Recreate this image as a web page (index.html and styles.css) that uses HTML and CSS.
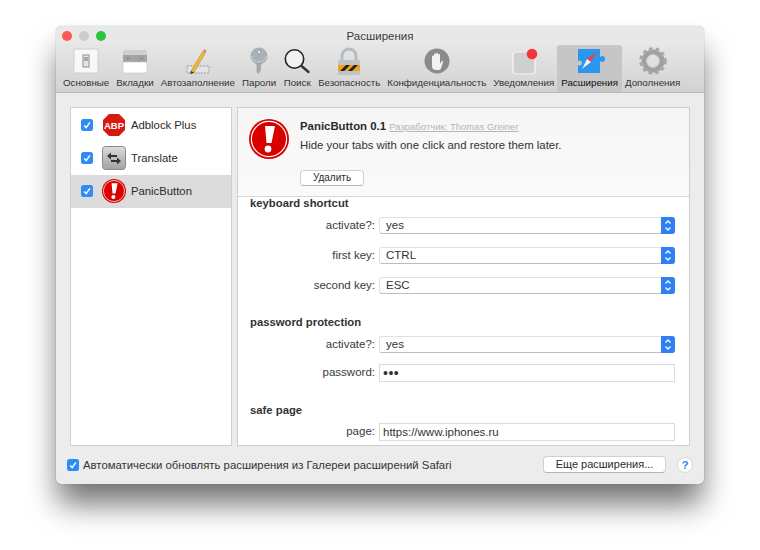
FILE: index.html
```html
<!DOCTYPE html>
<html lang="ru">
<head>
  <meta charset="UTF-8" />
  <title>Расширения</title>
  <link rel="stylesheet" href="styles.css">
</head>
<body>
  <svg class="defs" width="0" height="0">
    <defs>
      <linearGradient id="grey" x1="0" y1="0" x2="0" y2="1">
        <stop offset="0" stop-color="#dcdcdc"/>
        <stop offset="1" stop-color="#a2a2a2"/>
      </linearGradient>
    </defs>
    <symbol id="panic" viewBox="0 0 40 40">
      <circle cx="20" cy="20" r="20" fill="#d90000"/>
      <circle cx="20" cy="20" r="17.6" fill="none" stroke="#fff" stroke-width="1.2"/>
      <path d="M16 7h10l-3.500 17h-5z" fill="#fff"/>
      <circle cx="19" cy="30" r="3.400" fill="#fff"/>
    </symbol>
    <symbol id="check" viewBox="0 0 12 12">
      <rect width="12" height="12" rx="2.5" fill="#2f8cf6"/>
      <path d="M3.2 6.4l2 2.2 3.7-5.2" fill="none" stroke="#fff" stroke-width="1.5"/>
    </symbol>
    <symbol id="stepper" viewBox="0 0 14 17">
      <path d="M0 0h11a3 3 0 0 1 3 3v11a3 3 0 0 1-3 3H0z" fill="#2f80f5"/>
      <path d="M4.5 6.5L7 4l2.5 2.5M4.5 10.5L7 13l2.5-2.5" fill="none" stroke="#fff" stroke-width="1.3"/>
    </symbol>
  </svg>

  <div class="window">
    <div class="titlebar">
      <div class="lights">
        <span class="light red"></span>
        <span class="light gray"></span>
        <span class="light green"></span>
      </div>
      <div class="title">Расширения</div>
    </div>

    <div class="toolbar">
      <div class="tool">
        <svg width="28" height="28" viewBox="0 0 28 28">
          <rect x="2" y="2" width="24" height="24" fill="#f8f8f8" stroke="#cfcfcf"/>
          <rect x="11" y="8" width="6" height="12" fill="#e6e6e6" stroke="#8d8d8d"/>
          <rect x="12" y="10" width="4" height="4" fill="#a9a9a9"/>
        </svg>
        <span>Основные</span>
      </div>
      <div class="tool">
        <svg width="28" height="28" viewBox="0 0 28 28">
          <path d="M2 5a2 2 0 0 1 2-2h20a2 2 0 0 1 2 2v6H2z" fill="#cfcfcf"/>
          <rect x="2" y="8" width="24" height="7" fill="#a4a4a4"/>
          <path d="M2 15h24v9a2 2 0 0 1-2 2H4a2 2 0 0 1-2-2z" fill="#fff" stroke="#c4c4c4" stroke-width=".6"/>
          <path d="M6 10.500l2 2M8 10.500l-2 2M20 10.500l2 2M22 10.500l-2 2" stroke="#666" stroke-width=".6"/>
          <path d="M18 8v7" stroke="#8a8a8a" stroke-width=".6"/>
        </svg>
        <span>Вкладки</span>
      </div>
      <div class="tool">
        <svg width="28" height="28" viewBox="0 0 28 28">
          <rect x="3" y="19" width="22" height="7" fill="#e4e4e4" stroke="#8a8a8a" stroke-dasharray="2 1.200" stroke-width=".8"/>
          <path d="M7 24L19 4l2.500 1.500L10 25.500l-3.500 1.500z" fill="#f1bb33" stroke="#9a7a22" stroke-width=".5"/>
          <path d="M19 4l1.200-2 2.500 1.500-1.200 2z" fill="#e8837e"/>
          <path d="M7 24l3 1.500-3.500 1.500z" fill="#333"/>
        </svg>
        <span>Автозаполнение</span>
      </div>
      <div class="tool">
        <svg width="20" height="28" viewBox="0 0 20 28">
          <circle cx="10" cy="9" r="8.500" fill="#a8b1b6"/>
          <path d="M7.500 15h5v3l-1 1.500 1 1.500-1 1.500v1.500l-2 3-2-2z" fill="#a0a9ae"/>
          <circle cx="10" cy="5" r="1.800" fill="#e3e6e8" stroke="#7f878b" stroke-width=".5"/>
          <path d="M3 9a7 6 0 0 0 14 0" fill="none" stroke="#c9cfd2" stroke-width="1"/>
        </svg>
        <span>Пароли</span>
      </div>
      <div class="tool">
        <svg width="28" height="28" viewBox="0 0 28 28">
          <circle cx="11.500" cy="12" r="9.200" fill="#f2f2f2" stroke="#222" stroke-width="1.600"/>
          <path d="M18.500 19l7 6" stroke="#333" stroke-width="2.400" stroke-linecap="round"/>
        </svg>
        <span>Поиск</span>
      </div>
      <div class="tool">
        <svg width="26" height="28" viewBox="0 0 26 28">
          <path d="M6 14V9a7 7 0 0 1 14 0v5" fill="none" stroke="#b4bcc4" stroke-width="3"/>
          <rect x="2" y="13" width="22" height="15" rx="1.500" fill="#bfc3c6"/>
          <path d="M2 18h22v6H2z" fill="#f0a31a"/>
          <path d="M4 24l6-6h4l-6 6zM12 24l6-6h4l-6 6z" fill="#222"/>
        </svg>
        <span>Безопасность</span>
      </div>
      <div class="tool">
        <svg width="28" height="28" viewBox="0 0 28 28">
          <circle cx="14" cy="14" r="12.500" fill="#8b8b8b"/>
          <path d="M9 14V9.500a1 1 0 0 1 2 0V14V7.500a1 1 0 0 1 2 0V14V7a1 1 0 0 1 2 0v7V8a1 1 0 0 1 2 0v9l1.500-2.500c.8-1 2-.2 1.500.8L18 21.500c-.7 1-1.500 1.500-3 1.500h-2c-2.500 0-4-1.500-4-4z" fill="#f2f2f2"/>
        </svg>
        <span>Конфиденциальность</span>
      </div>
      <div class="tool">
        <svg width="30" height="28" viewBox="0 0 30 28">
          <rect x="4" y="5" width="22" height="22" rx="3" fill="#cfcfcf" stroke="#f5f5f5" stroke-width="1.200"/>
          <circle cx="23" cy="7" r="5.300" fill="#f5333a"/>
        </svg>
        <span>Уведомления</span>
      </div>
      <div class="tool active">
        <svg width="30" height="28" viewBox="0 0 30 28">
          <path d="M3 2h22v8c2-2 5-1 5 2s-3 4-5 2v12H3v-8c2 1.500 4 0 4-2s-2-3.500-4-2z" fill="#2a96ee"/>
          <path d="M21 5l-5 10-4-3z" fill="#e8443a"/>
          <path d="M7 22l5-10 4 3z" fill="#f2f2f2"/>
        </svg>
        <span>Расширения</span>
      </div>
      <div class="tool">
        <svg width="28" height="28" viewBox="0 0 28 28">
          <circle cx="14" cy="14" r="9" fill="none" stroke="#a0a0a0" stroke-width="5"/>
          <circle cx="14" cy="14" r="12" fill="none" stroke="#a8a8a8" stroke-width="3.500" stroke-dasharray="3.400 3.140"/>
          <circle cx="14" cy="14" r="6.300" fill="none" stroke="#cfcfcf" stroke-width="1"/>
        </svg>
        <span>Дополнения</span>
      </div>
    </div>

    <div class="content">
      <div class="panels">
        <div class="sidebar">
          <div class="ext">
            <svg class="cb"><use href="#check"/></svg>
            <svg class="ext-icon" viewBox="0 0 24 24">
              <path d="M7 1h10l6 6v10l-6 6H7l-6-6V7z" fill="#d81a0e"/>
              <text x="12" y="15.500" class="abp">ABP</text>
            </svg>
            <span>Adblock Plus</span>
          </div>
          <div class="ext">
            <svg class="cb"><use href="#check"/></svg>
            <svg class="ext-icon" viewBox="0 0 24 24">
              <rect x=".5" y=".5" width="23" height="23" rx="3" fill="url(#grey)" stroke="#8a8a8a"/>
              <path d="M5 10l4-3.500V9h6v2H9v2.500zM19 15l-4-3.500V14H9v2h6v2.500z" fill="#333"/>
            </svg>
            <span>Translate</span>
          </div>
          <div class="ext selected">
            <svg class="cb"><use href="#check"/></svg>
            <svg class="ext-icon"><use href="#panic"/></svg>
            <span>PanicButton</span>
          </div>
        </div>

        <div class="detail">
          <div class="detail-head">
            <svg class="panic-big"><use href="#panic"/></svg>
            <div class="head-text">
              <div class="head-name"><b>PanicButton 0.1</b> <a class="dev">Разработчик: Thomas Greiner</a></div>
              <div class="head-desc">Hide your tabs with one click and restore them later.</div>
              <div class="btn remove">Удалить</div>
            </div>
          </div>

          <h4 class="first">keyboard shortcut</h4>
          <div class="row">
            <label>activate?:</label>
            <div class="select">yes<svg><use href="#stepper"/></svg></div>
          </div>
          <div class="row">
            <label>first key:</label>
            <div class="select">CTRL<svg><use href="#stepper"/></svg></div>
          </div>
          <div class="row">
            <label>second key:</label>
            <div class="select">ESC<svg><use href="#stepper"/></svg></div>
          </div>

          <h4>password protection</h4>
          <div class="row tight">
            <label>activate?:</label>
            <div class="select">yes<svg><use href="#stepper"/></svg></div>
          </div>
          <div class="row pw">
            <label>password:</label>
            <div class="input dots">•••</div>
          </div>

          <h4 class="safe">safe page</h4>
          <div class="row">
            <label>page:</label>
            <div class="input">https://www.iphones.ru</div>
          </div>
        </div>
      </div>

      <div class="footer">
        <svg class="cb"><use href="#check"/></svg>
        <span class="auto">Автоматически обновлять расширения из Галереи расширений Safari</span>
        <div class="btn more">Еще расширения...</div>
        <div class="help">?</div>
      </div>
    </div>
  </div>
</body>
</html>
```

FILE: styles.css
```css
html,
body {
  height: 550px;
}

body {
  margin: 0;
  overflow: hidden;
  background: #fff;
  font-family: 'Liberation Sans', Arial, sans-serif;
  font-size: 11px;
  color: #2b2b2b;
}

.defs {
  position: absolute;
}

.window {
  width: 648px;
  height: 458px;
  margin: 0 0 0 56px;
  position: relative;
  top: 26px;
  background: #ececec;
  border-radius: 5px;
  box-shadow: 0 0 1px rgba(0,0,0,0.5), 0 22px 30px -2px rgba(0,0,0,0.55);
  overflow: hidden;
}

.titlebar {
  height: 19px;
  display: flex;
  align-items: center;
  background: #e8e8e8;
}

.lights {
  display: flex;
  gap: 7px;
  padding: 0 0 0 6px;
  margin-top: 1px;
}

.light {
  width: 10px;
  height: 10px;
  border-radius: 50%;
}

.light.red { background: #fb5a55; }
.light.gray { background: #cdcdcd; }
.light.green { background: #2dc440; }

.title {
  flex: 1;
  text-align: center;
  padding-right: 50px;
  margin-top: 1px;
  color: #3c3c3c;
  font-size: 11.500px;
}

.toolbar {
  height: 47px;
  display: flex;
  padding-left: 3.500px;
  background: linear-gradient(#e6e6e6, #d2d2d2);
  border-bottom: 1px solid #b9b9b9;
}

.tool {
  display: flex;
  flex-direction: column;
  align-items: center;
  justify-content: flex-end;
  padding: 0 3.500px 4px;
  color: #333;
  font-size: 9.750px;
  white-space: nowrap;
}

.tool svg {
  margin-bottom: 2px;
}

.tool.active {
  padding: 0 4px 4px;
  margin: 0 -0.500px;
  border-radius: 3px 3px 0 0;
  background: #c6c6c6;
  color: #111;
}

.content {
  padding: 14px 14px 0;
}

.panels {
  display: flex;
  gap: 5px;
  height: 339px;
}

.sidebar {
  width: 160px;
  background: #fff;
  border: 1px solid #cfcfcf;
}

.ext {
  height: 33.300px;
  display: flex;
  align-items: center;
  padding-left: 10px;
  font-size: 11.300px;
}

.ext.selected {
  background: #dcdcdc;
}

.cb {
  width: 12px;
  height: 12px;
  flex: none;
}

.ext-icon {
  width: 24px;
  height: 24px;
  margin: 0 5px 0 9px;
}

.abp {
  font-size: 9.500px;
  font-weight: bold;
  fill: #fff;
  text-anchor: middle;
}

.detail {
  flex: 1;
  background: #fff;
  border: 1px solid #cfcfcf;
  overflow: hidden;
}

.detail-head {
  height: 88px;
  display: flex;
  background: linear-gradient(#f6f6f6, #fafafa);
  border-bottom: 1px solid #d6d6d6;
}

.panic-big {
  width: 40px;
  height: 40px;
  margin: 11px 11px 0 11px;
  flex: none;
}

.head-text {
  padding-top: 12px;
}

.head-name {
  font-size: 11.400px;
  height: 19px;
}

.dev {
  font-size: 9.500px;
  color: #b5b5b5;
  text-decoration: underline;
}

.head-desc {
  font-size: 11.400px;
  color: #333;
}

.btn {
  background: #fff;
  border: 1px solid #d0d0d0;
  border-bottom-color: #b4b4b4;
  border-radius: 4px;
  text-align: center;
}

.remove {
  width: 62px;
  height: 14px;
  line-height: 14px;
  margin-top: 19px;
  font-size: 10px;
}

h4 {
  margin: 8px 0 7px 12px;
  font-size: 11.300px;
  line-height: 14px;
  color: #333;
}

h4.first {
  margin-top: -1px;
}

h4.safe {
  margin-bottom: 6px;
}

.row {
  height: 30px;
  display: flex;
  gap: 4px;
  align-items: flex-start;
  font-size: 11.500px;
}

.row.tight {
  height: 28px;
}

.row.pw {
  height: 31px;
}

label {
  width: 137px;
  text-align: right;
  line-height: 17px;
  color: #3a3a3a;
}

.select,
.input {
  width: 296px;
  box-sizing: border-box;
  position: relative;
  color: #333;
}

.select {
  height: 17px;
  padding-left: 6px;
  background: #fff;
  border-top: 1px solid #e2e2e2;
  border-left: 1px solid #e2e2e2;
  border-bottom: 1px solid #bdbdbd;
  border-radius: 3px;
  line-height: 15px;
}

.select svg {
  position: absolute;
  right: 0;
  top: -1px;
  width: 14px;
  height: 17px;
}

.input {
  height: 18px;
  border: 1px solid #dcdcdc;
  line-height: 16px;
  padding-left: 3px;
}

.input.dots {
  font-size: 14px;
  letter-spacing: 0.500px;
}

.footer {
  display: flex;
  align-items: center;
  height: 17px;
  margin-top: 10px;
  margin-left: -3px;
}

.auto {
  margin-left: 4px;
  font-size: 11.350px;
  color: #333;
}

.more {
  margin-left: auto;
  width: 121px;
  height: 15px;
  line-height: 15px;
  font-size: 11px;
}

.help {
  width: 16px;
  height: 16px;
  margin: 0 -3px 0 11px;
  border-radius: 50%;
  background: #fff;
  border: 1px solid #d8d8d8;
  box-sizing: border-box;
  text-align: center;
  line-height: 14px;
  color: #2f80f5;
  font-weight: bold;
  font-size: 11px;
}
```
